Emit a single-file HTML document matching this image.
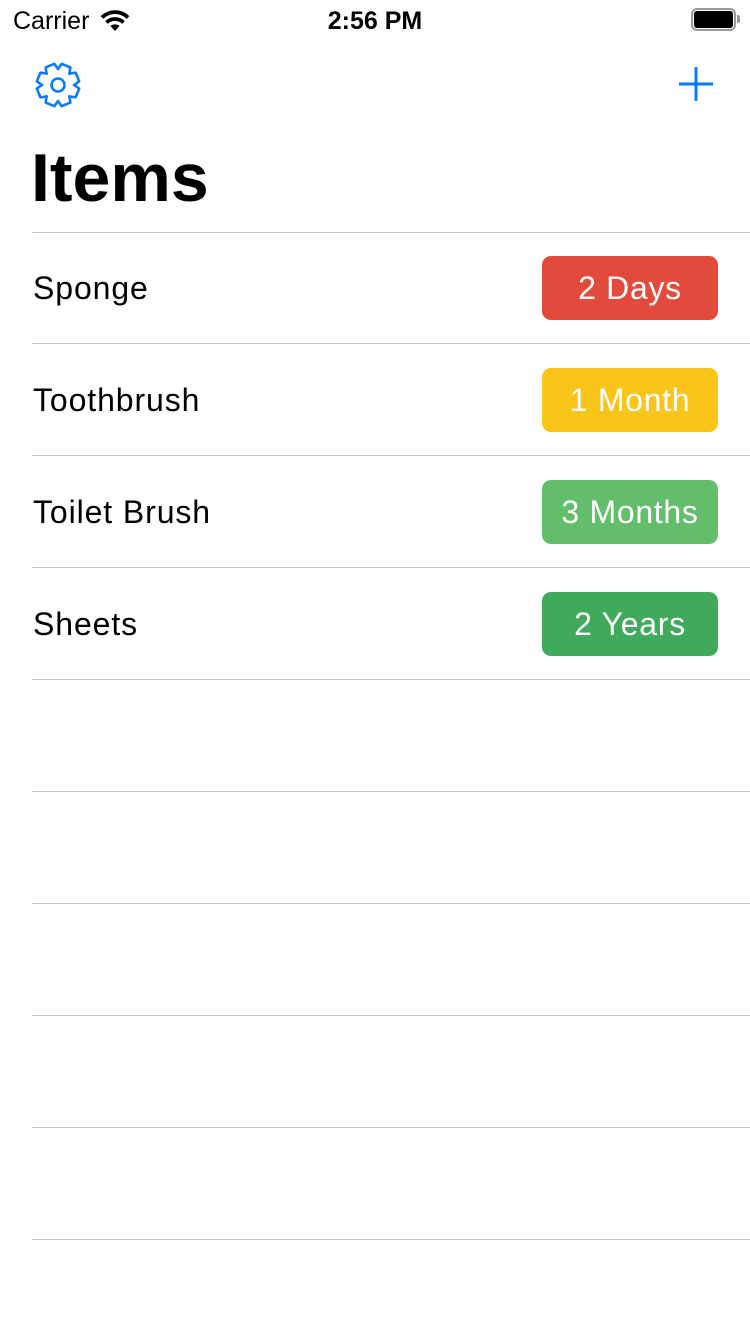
<!DOCTYPE html>
<html><head><meta charset="utf-8"><style>
*{margin:0;padding:0;box-sizing:border-box}
body{width:750px;height:1334px;background:#fff;font-family:"Liberation Sans",sans-serif;position:relative;overflow:hidden;color:#000}
.abs{position:absolute}
.sep{position:absolute;left:32px;right:0;height:1px;background:#c8c7cc}
.lbl{position:absolute;left:33px;font-size:32px;line-height:40px;letter-spacing:0.9px}
.badge{position:absolute;left:542px;width:176px;height:64px;border-radius:9px;color:#fff;font-size:32px;line-height:64px;text-align:center;letter-spacing:0.7px}
</style></head><body>
<div class="abs" style="left:13px;top:6px;font-size:25px;line-height:30px">Carrier</div>
<svg class="abs" style="left:99px;top:9px" width="32" height="24" viewBox="0 0 32 24">
<path d="M16 22 L11.5 17 A7 7 0 0 1 20.5 17 Z" fill="#000"/>
<path d="M7.5 13.5 A12 12 0 0 1 24.5 13.5" stroke="#000" stroke-width="3.8" fill="none"/>
<path d="M3 8.5 A18.5 18.5 0 0 1 29 8.5" stroke="#000" stroke-width="3.8" fill="none"/>
</svg>
<div class="abs" style="left:0;width:750px;top:6px;text-align:center;font-size:25px;line-height:30px;font-weight:bold">2:56 PM</div>
<div class="abs" style="left:691px;top:8px;width:45px;height:23px;border:2px solid #999;border-radius:6px"></div>
<div class="abs" style="left:694px;top:11px;width:39px;height:17px;background:#000;border-radius:3px"></div>
<div class="abs" style="left:737px;top:15px;width:3px;height:8px;background:#999;border-radius:0 2px 2px 0"></div>
<svg class="abs" style="left:34px;top:61px" width="48" height="48" viewBox="-24 -24 48 48">
<polygon id="g" fill="none" stroke="#0a7aff" stroke-width="2.6" stroke-linejoin="round"/>
<circle r="6.5" fill="none" stroke="#0a7aff" stroke-width="2.6"/>
</svg>
<script>
var p=[],n=8,ro=21.5,ri=16;
for(var i=0;i<n;i++){var c=i*2*Math.PI/n+Math.PI/8;
[[-0.40,ri],[-0.22,ro],[0.22,ro],[0.40,ri]].forEach(function(a){p.push((Math.cos(c+a[0])*a[1]).toFixed(2)+","+(Math.sin(c+a[0])*a[1]).toFixed(2))});}
document.getElementById('g').setAttribute('points',p.join(' '));
</script>
<svg class="abs" style="left:678px;top:66px" width="36" height="36" viewBox="0 0 36 36">
<path d="M18 1V35M1 18H35" stroke="#0a7aff" stroke-width="3" fill="none"/>
</svg>
<div class="abs" style="left:31px;top:138px;font-size:68px;font-weight:bold;line-height:80px">Items</div>
<div class="sep" style="top:232px"></div>
<div class="lbl" style="top:268px">Sponge</div>
<div class="badge" style="top:256px;background:#e24b3b">2 Days</div>
<div class="sep" style="top:343px"></div>
<div class="lbl" style="top:380px">Toothbrush</div>
<div class="badge" style="top:368px;background:#f9c51a">1 Month</div>
<div class="sep" style="top:455px"></div>
<div class="lbl" style="top:492px">Toilet Brush</div>
<div class="badge" style="top:480px;background:#63be6b">3 Months</div>
<div class="sep" style="top:567px"></div>
<div class="lbl" style="top:604px">Sheets</div>
<div class="badge" style="top:592px;background:#3fa95c">2 Years</div>
<div class="sep" style="top:679px"></div>
<div class="sep" style="top:791px"></div>
<div class="sep" style="top:903px"></div>
<div class="sep" style="top:1015px"></div>
<div class="sep" style="top:1127px"></div>
<div class="sep" style="top:1239px"></div>
</body></html>
